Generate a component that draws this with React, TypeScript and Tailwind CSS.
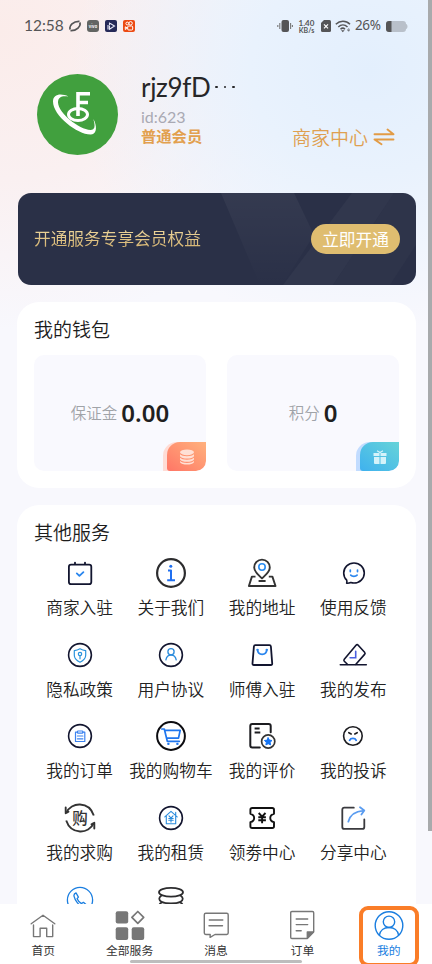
import type { ReactNode } from "react";

const NAVY = "#12152f";
const INK = "#2c2c2e";
const BLUE = "#1a7ee0";

type iconProps = {
  children: ReactNode;
  stroke?: string;
  width?: number;
};

const Icon = ({ children, stroke = NAVY, width = 1.7 }: iconProps) => (
  <svg
    viewBox="0 0 32 32"
    className="h-8 w-8 shrink-0"
    fill="none"
    stroke={stroke}
    strokeWidth={width}
    strokeLinecap="round"
    strokeLinejoin="round"
  >
    {children}
  </svg>
);

const Ring = () => <circle cx="16" cy="16" r="11.400" strokeWidth="1.600" />;

const services = [
  {
    label: "商家入驻",
    icon: (
      <Icon width={1.8}>
        <rect x="4.9" y="7.6" width="22.4" height="19.6" rx="2.2" />
        <path d="M11 5.6v1.6M21 5.6v1.6" />
        <path d="M12.8 16.4l2.6 2.5 4-3.8" stroke="#2a86ee" />
      </Icon>
    ),
  },
  {
    label: "关于我们",
    icon: (
      <Icon stroke={INK} width={2.2}>
        <circle cx="16" cy="16" r="13.9" />
        <circle cx="15.8" cy="9.2" r="1.5" fill="#1f6ff0" stroke="none" />
        <path
          d="M13 13.6h3v9.6M12.2 23.3h7.8"
          stroke="#1f6ff0"
          strokeWidth="2"
          strokeLinecap="butt"
        />
      </Icon>
    ),
  },
  {
    label: "我的地址",
    icon: (
      <Icon stroke="#333" width={1.9}>
        <path d="M16 21.4c-3.2-3.3-7.8-6.3-7.8-11a7.8 7.8 0 0 1 15.6 0c0 4.7-4.6 7.7-7.8 11z" />
        <circle cx="16" cy="10" r="3.2" stroke="#2a8cf0" strokeWidth="1.6" />
        <path d="M9.5 19.6H5.9L2.9 29h26.6l-3.1-9.400h-3.600M12.600 24h7" strokeLinecap="butt" />
      </Icon>
    ),
  },
  {
    label: "使用反馈",
    icon: (
      <Icon>
        <path
          d="M9.700 23.200C7.700 21.300 6.700 18.800 6.700 16a10.300 10 0 1 1 10.300 10c-1.200 0-2.300-.2-3.200-.5-1.300.6-2.600.9-4.200.7.400-1 .4-2 .1-3z"
          strokeWidth="1.600"
        />
        <path
          d="M13.300 13v1.600M20.500 13v1.600M13.700 18.200c1.500 1.500 4.900 1.500 6.400 0"
          stroke="#2a86ee"
        />
      </Icon>
    ),
  },
  {
    label: "隐私政策",
    icon: (
      <Icon>
        <Ring />
        <g stroke="#2a93dc" strokeWidth="1.200">
          <path d="M16 9.800c1.800 1.100 3.600 1.700 5.700 1.800v4.600c0 3.300-2.500 5.500-5.700 7-3.200-1.500-5.700-3.700-5.700-7v-4.600c2.100-.1 3.900-.7 5.700-1.800z" />
          <circle cx="16" cy="15" r="1.700" />
          <path d="M16 16.800v3" />
        </g>
      </Icon>
    ),
  },
  {
    label: "用户协议",
    icon: (
      <Icon>
        <Ring />
        <g stroke="#2a8bdc" strokeWidth="1.300">
          <circle cx="16" cy="12.800" r="3.100" />
          <path d="M10.900 20.900c.5-3 2.300-4.800 5.100-4.800s4.700 1.800 5.200 4.800" />
        </g>
      </Icon>
    ),
  },
  {
    label: "师傅入驻",
    icon: (
      <Icon width={1.800}>
        <path d="M9.300 6.200h14.200c.8 0 1.300.5 1.400 1.300l1.300 16.900c.1 1-.4 1.600-1.400 1.600H7.900c-1 0-1.500-.6-1.400-1.600L7.900 7.500c.1-.8.600-1.300 1.400-1.300z" />
        <path d="M11.500 10.800c.4 6 8.900 6 9.300 0" stroke="#2a86ee" />
        <path d="M11.500 10.800h.1M20.700 10.800h.1" stroke="#2a86ee" strokeWidth="2.300" />
      </Icon>
    ),
  },
  {
    label: "我的发布",
    icon: (
      <Icon width={1.600}>
        <path d="M10.400 25.300l-3.100-3c-.6-.7-.6-1.300 0-2.100L19 6.300c.8-.9 1.500-.9 2.200-.1l6.400 7c.7.8.7 1.400 0 2.200l-8.700 9.900" />
        <path d="M3.300 25.700h26" />
        <path d="M18.700 12.200v6.600h-5.600" stroke="#4a5fe0" strokeLinejoin="miter" />
      </Icon>
    ),
  },
  {
    label: "我的订单",
    icon: (
      <Icon>
        <Ring />
        <g stroke="#3c83f0" strokeWidth="1.200">
          <path d="M13.500 12.200h-2v9.300h9.300v-9.300h-2" />
          <rect x="13.500" y="11" width="5.300" height="2.200" rx=".5" />
          <path d="M13.400 16h5.500M13.400 18.800h5.500" />
        </g>
      </Icon>
    ),
  },
  {
    label: "我的购物车",
    icon: (
      <Icon stroke="#0c0c10" width={2}>
        <circle cx="16" cy="16" r="13.900" />
        <g stroke="#1f76ee" strokeWidth="1.700">
          <path d="M6.800 9h2.500l3 12.300h12M9.800 10.300h15.400l-1.700 7.800H11.700" />
          <path d="M13.300 23.900h.2M22.300 23.900h.2" strokeWidth="2.300" />
        </g>
      </Icon>
    ),
  },
  {
    label: "我的评价",
    icon: (
      <Icon stroke="#1c1c20" width={2}>
        <path d="M24.700 12.200V6c0-1.200-.7-2-2-2H6.300c-1.300 0-2 .8-2 2v19.400c0 1.200.7 2 2 2h7.500" />
        <path d="M8.600 8.500h5M8.600 12.600h5.700" strokeLinecap="butt" />
        <circle cx="22.200" cy="21.500" r="6.600" stroke="#333" strokeWidth="1.700" />
        <path
          d="M22.200 17.800l1.200 2.300 2.600.4-1.900 1.800.5 2.600-2.400-1.200-2.300 1.200.4-2.600-1.900-1.800 2.600-.4z"
          fill="#1474f4"
          stroke="#1474f4"
          strokeWidth="1"
        />
      </Icon>
    ),
  },
  {
    label: "我的投诉",
    icon: (
      <Icon stroke="#1c1c20" width={1.600}>
        <circle cx="15.900" cy="16" r="9.300" />
        <path d="M11.800 12.700l2.400 1.300M20.200 12.700l-2.400 1.300" />
        <path d="M12.600 20.300c1.200-2.500 5.400-2.500 6.600 0" stroke="#2a7ef0" strokeWidth="1.800" />
      </Icon>
    ),
  },
  {
    label: "我的求购",
    icon: (
      <Icon stroke="#333" width={1.900}>
        <path d="M2.300 10.800C7-.4 25-1 29.800 13.500M29.700 21.200C25 32.400 7 33 2.200 18.500" strokeLinecap="butt" />
        <path d="M1.700 5.500v5.800l2.800-1.600M30.300 26.500v-5.800l-2.800 1.600" />
        <text
          x="16"
          y="21.500"
          textAnchor="middle"
          fontSize="15.500"
          fontWeight="500"
          fill="#333"
          stroke="none"
        >
          购
        </text>
      </Icon>
    ),
  },
  {
    label: "我的租赁",
    icon: (
      <Icon>
        <Ring />
        <g stroke="#2a8bdc" strokeWidth="1.100">
          <path d="M9.800 14.800L16 9.300l6.200 5.500M11.300 13.800v8h9.400v-8M20.700 13v-2.700" />
          <path d="M14 13.800l2 2.300 2-2.300M16 16.100v4M13.800 16.500h4.400M13.800 18.300h4.400" />
        </g>
      </Icon>
    ),
  },
  {
    label: "领劵中心",
    icon: (
      <Icon stroke="#111" width={1.900}>
        <path d="M6.200 6h20c1.200 0 1.800.7 1.800 1.800v4c-5 1.200-5 7.200 0 8.400v4c0 1.200-.6 1.800-1.800 1.800h-20c-1.200 0-1.800-.6-1.800-1.800v-4c5-1.200 5-7.200 0-8.400v-4C4.400 6.700 5 6 6.200 6z" />
        <path
          d="M12.700 11l3.400 3.700 3.400-3.700M16.100 14.700v6.500M12.300 15.200h7.600M12.300 18.200h7.600"
          strokeLinecap="butt"
        />
      </Icon>
    ),
  },
  {
    label: "分享中心",
    icon: (
      <Icon stroke="#3a3a3e" width={1.800}>
        <path d="M16.800 5.700H7.300c-1.200 0-2 .8-2 2v17.200c0 1.200.8 2 2 2h18c1.200 0 2-.8 2-2v-7.500" />
        <path d="M11.300 19.700c1.600-6.300 6.300-10.400 15.200-11.100M23 5.300l4.300 3.200-2.900 4.100" stroke="#5a9cf0" />
      </Icon>
    ),
  },
  {
    icon: (
      <Icon stroke={BLUE} width={1.300}>
        <circle cx="16" cy="16" r="12.600" />
        <path d="M12 8.800c-1.400.6-2.300 1.600-2 3.300 1 4.300 4.700 9.400 9 10.600 1.600.4 2.800-.4 3.500-1.800l-3.100-2.600-1.900 1.300c-2.100-1-3.400-2.800-4.400-4.900l1.300-1.600z" />
      </Icon>
    ),
  },
  {
    icon: (
      <Icon stroke={INK} width={1.800}>
        <ellipse cx="16" cy="8.300" rx="12" ry="4.400" />
        <path d="M6.500 11.500c-3 2-3 4.600 0 6.200 4.500 2.400 14.500 2.400 19 0 3-1.600 3-4.200 0-6.200M6.500 18.500c-3 2-3 4.600 0 6.200 4.500 2.400 14.500 2.400 19 0 3-1.600 3-4.200 0-6.200" />
      </Icon>
    ),
  },
];

const tabs = [
  {
    label: "首页",
    icon: (
      <Icon stroke="#777" width={1.400}>
        <path d="M4.200 13.800L16 5.300l11.800 8.500M6.500 15v11.600h6.600v-8.300h6.600v8.300h6V15" />
      </Icon>
    ),
  },
  {
    label: "全部服务",
    icon: (
      <Icon stroke="#777" width={1.700}>
        <g fill="#777" stroke="none">
          <rect x="1.700" y="1.300" width="12.500" height="12.200" rx="2" />
          <rect x="1.700" y="17.200" width="12.500" height="12.700" rx="2" />
          <rect x="17.700" y="17.200" width="12.500" height="12.700" rx="2" />
        </g>
        <path d="M23.800 1.500l5.900 5.900-5.900 5.900-5.900-5.900z" />
      </Icon>
    ),
  },
  {
    label: "消息",
    icon: (
      <Icon stroke="#777" width={1.400}>
        <path d="M5.800 3.300h20.900c1 0 1.500.5 1.500 1.500v18.300c0 1-.5 1.400-1.500 1.400H15l-4.900 2.800.1-2.800H5.800c-1 0-1.500-.5-1.500-1.400V4.800c0-1 .5-1.500 1.500-1.500zM9.300 10h13.500M9 15.800h13.500" />
      </Icon>
    ),
  },
  {
    label: "订单",
    icon: (
      <Icon stroke="#777" width={1.400}>
        <path d="M5.900 1.500h20.500c.8 0 1.300.5 1.300 1.200v19.100l-6.500 6.700H5.900c-.8 0-1.200-.5-1.200-1.200V2.700c0-.7.5-1.200 1.200-1.200zM10.200 9h11.500M10.200 14.600h11.500M10.200 20.700h5" />
        <path d="M27.500 22h-6.200v6.300z" fill="#777" />
      </Icon>
    ),
  },
  {
    label: "我的",
    active: true,
    icon: (
      <Icon stroke={BLUE} width={1.400}>
        <circle cx="16" cy="15.500" r="13.800" />
        <circle cx="16" cy="11.800" r="5.700" />
        <path d="M6.500 25c.6-4.500 4.400-7.500 9.500-7.500s8.900 3 9.500 7.500" />
      </Icon>
    ),
  },
];

const StatusBar = () => (
  <div className="flex h-[52px] items-center justify-between pl-6 pr-[24px] text-[#555557]">
    <div className="flex items-center gap-[6px]">
      <span className="w-[39px] font-[Lato] text-[15.500px] leading-none">12:58</span>
      <svg viewBox="0 0 12 12" className="h-3 w-3" fill="none" stroke="currentColor">
        <path d="M1.300 9.500C-.5 6 4.500 1 10.500 1.300" strokeWidth="1.700" />
        <path d="M10.700 2.500C12.500 6 7.500 11 1.500 10.700" strokeWidth="1.700" />
      </svg>
      <div className="flex h-3 w-3 items-center justify-center rounded-[3px] bg-[#626563] text-[4px] font-bold text-white">
        vivo
      </div>
      <svg viewBox="0 0 12 12" className="h-3 w-3 rounded-[2px] bg-[#252958]">
        <path d="M3 5v4.500M4.500 2.500v3M4.500 3l5 3-5 3.300V6" fill="none" stroke="#e4e5f6" strokeWidth="1.100" />
      </svg>
      <svg viewBox="0 0 12 12" className="h-3 w-3 rounded-[2px] bg-[#ec4a12]">
        <g fill="none" stroke="#fff" strokeWidth="1">
          <circle cx="4.300" cy="3.500" r="1.400" />
          <circle cx="7.600" cy="3.300" r="1.700" />
          <rect x="4.700" y="6" width="5" height="4" rx="1" />
          <path d="M4.500 8L2.300 6.800v2.700z" />
        </g>
      </svg>
    </div>
    <div className="flex items-center">
      <svg viewBox="0 0 16 14" className="mr-[4px] h-[14px] w-4">
        <rect x="4.500" y="1" width="7.500" height="12" rx="2" fill="#555557" />
        <path d="M2.800 4v6M.8 6v2M13.600 4v6M15.400 6v2" stroke="#777" strokeWidth="1.100" />
      </svg>
      <div className="mr-[5px] w-[19px] whitespace-nowrap text-center font-[Lato] text-[8px] font-bold leading-[8px]">
        <div>1.40</div>
        <div className="text-[7px] leading-[7px]">KB/s</div>
      </div>
      <svg viewBox="0 0 10 12" className="mr-[4px] h-3 w-[10px]">
        <path d="M3 0h5.500A1.500 1.500 0 0 1 10 1.500v9A1.500 1.500 0 0 1 8.500 12h-7A1.500 1.500 0 0 1 0 10.500V3z" fill="#555557" />
        <path d="M3 4.300l4 4M7 4.300l-4 4" stroke="#fff" strokeWidth="1.200" />
      </svg>
      <svg viewBox="0 0 16 13" className="mr-[4px] h-[13px] w-4" fill="none" stroke="#555557" strokeWidth="1.500">
        <path d="M.8 4.300C5 .3 11 .3 15 4.300M3.300 7c2.700-2.600 6.500-2.600 9.200 0" />
        <path d="M5.500 9.200c1.400-1.300 3.200-1.300 4.500 0" />
        <path d="M6 10.200h3.600l-1.800 2z" fill="#555557" stroke="none" />
        <path d="M12.200 10h3M13.700 8.500v3.500" strokeWidth="1" strokeDasharray="1 .6" />
      </svg>
      <span className="mr-[4px] w-[27px] whitespace-nowrap font-['Noto_Sans'] text-[13.500px] leading-none tracking-[-0.400px]">
        26%
      </span>
      <svg viewBox="0 0 22 11" className="h-[11px] w-[22px]">
        <rect width="20" height="11" rx="3" fill="#b9c0ca" />
        <path d="M3 0h2.500v11H3a3 3 0 0 1-3-3V3a3 3 0 0 1 3-3z" fill="#555557" />
        <path d="M20 3c2 .5 2 4.500 0 5z" fill="#b9c0ca" />
      </svg>
    </div>
  </div>
);

const Profile = () => (
  <div className="flex h-[141px] pl-[37px] pt-[22px]">
    <svg viewBox="0 0 81 81" className="h-[81px] w-[81px] shrink-0">
      <circle cx="40.500" cy="40.500" r="40.500" fill="#41a03e" />
      <path
        d="M31.500 22.500C24 19 16 20 16 27.500C16 42 41 61 54 60.500C60.500 60 60 51 56.300 45C58.500 52 58 56 53.500 56C42 55.500 21.500 39 21 28.500C21 22.500 25.500 21.500 31.500 22.500Z"
        fill="#fff"
      />
      <ellipse cx="41" cy="40.500" rx="9.500" ry="6" fill="none" stroke="#fff" strokeWidth="3" />
      <path d="M41 42V19.800h12M41 28.500h10" fill="none" stroke="#fff" strokeWidth="3.600" />
    </svg>
    <div className="ml-[23px] flex w-[150px] flex-col">
      <div className="-mt-[2px] flex h-[30px] items-center whitespace-nowrap text-[#262628]">
        <span className="w-[74px] font-[Lato] text-[26px] leading-none tracking-[-0.300px]">rjz9fD</span>
        <span className="flex gap-[6px]">
          <i className="h-[2.500px] w-[2.500px] rounded-full bg-[#262628]" />
          <i className="h-[2.500px] w-[2.500px] rounded-full bg-[#262628]" />
          <i className="h-[2.500px] w-[2.500px] rounded-full bg-[#262628]" />
        </span>
      </div>
      <div className="mt-[6px] font-[Lato] text-[16px] leading-[18px] text-[#a9a9b3]">id:623</div>
      <div className="text-[15.300px] font-bold leading-[18px] text-[#e2a04f]">普通会员</div>
    </div>
    <div className="mt-[51px] flex h-6 items-center text-[19px] font-[350] text-[#dfa050]">
      <span className="ml-[1px] whitespace-nowrap">商家中心</span>
      <svg
        viewBox="0 0 22 18"
        className="ml-[5px] h-[18px] w-[22px]"
        fill="none"
        stroke="#e29b45"
        strokeWidth="1.900"
        strokeLinecap="round"
        strokeLinejoin="round"
      >
        <path d="M1.500 6.300h19L14.500 1.500M20.500 11.500h-19l7 4.700" />
      </svg>
    </div>
  </div>
);

const VipBanner = () => (
  <div className="relative ml-[18px] mr-4 flex h-[92px] items-center justify-between overflow-hidden rounded-[13px] bg-[#2a3047] pl-4 pr-4">
    <svg viewBox="0 0 398 92" className="absolute inset-0 h-full w-full" preserveAspectRatio="none">
      <defs>
        <linearGradient id="shine" x1="0" y1="0" x2="0" y2="1">
          <stop offset="0" stopColor="#fff" stopOpacity=".05" />
          <stop offset="1" stopColor="#fff" stopOpacity="0" />
        </linearGradient>
      </defs>
      <path d="M203 0h73l20 42-32 50h-22z" fill="url(#shine)" />
      <path d="M334 0h42l-61 92h-50z" fill="#fff" fillOpacity=".035" />
      <path d="M376 0h22v52l-26 40h-57z" fill="#fff" fillOpacity=".018" />
    </svg>
    <span className="relative bg-gradient-to-b from-[#f2dda4] to-[#cfac68] bg-clip-text text-[16.700px] text-transparent">
      开通服务专享会员权益
    </span>
    <button className="relative h-[30px] w-[89px] rounded-full bg-[#dfbd70] text-[16.700px] leading-[29px] text-white">
      立即开通
    </button>
  </div>
);

const Wallet = () => (
  <section className="ml-[17px] mr-4 mt-[17px] h-[186px] rounded-[22px] bg-white px-[17px] pt-[13px]">
    <h2 className="text-[19px] font-[350] leading-7 text-[#1c1c1c]">我的钱包</h2>
    <div className="mt-[12px] flex justify-between">
      <div className="relative flex h-[116px] w-[172px] items-center justify-center overflow-hidden rounded-[10px] bg-[#f9f9fe]">
        <span className="text-[15.500px] font-[350] text-[#a0a3a8]">保证金</span>
        <span className="ml-[4px] font-['Noto_Sans'] text-[24px] font-semibold text-[#1f1f21]">0.00</span>
        <div className="absolute bottom-0 right-0 rounded-tl-[14px] bg-[#ffdcd5] pl-[4px]">
          <div className="flex h-[29px] w-[39px] items-center justify-center rounded-bl-[3px] rounded-br-[10px] rounded-tl-[13px] bg-gradient-to-tr from-[#ff7566] to-[#ffb17d]">
            <svg viewBox="0 0 16 16" className="h-4 w-4" fill="#ffe0d5">
              <ellipse cx="8" cy="3.300" rx="7" ry="2.900" />
              <path d="M1 5.200c2 2.600 12 2.600 14 0v2c-1.500 3.200-12.500 3.200-14 0z" />
              <path d="M1 8.700c2 2.600 12 2.600 14 0v1.700c-1.500 3.200-12.500 3.200-14 0z" />
              <path d="M1 12c2 2.600 12 2.600 14 0v1.200c-1.500 3.200-12.500 3.200-14 0z" />
            </svg>
          </div>
        </div>
      </div>
      <div className="relative flex h-[116px] w-[172px] items-center justify-center overflow-hidden rounded-[10px] bg-[#f9f9fe]">
        <span className="text-[15.500px] font-[350] text-[#a0a3a8]">积分</span>
        <span className="ml-[4px] font-['Noto_Sans'] text-[24px] font-semibold text-[#1f1f21]">0</span>
        <div className="absolute bottom-0 right-0 rounded-tl-[14px] bg-[#c2dcff] pl-[4px]">
          <div className="flex h-[29px] w-[39px] items-center justify-center rounded-bl-[3px] rounded-br-[10px] rounded-tl-[13px] bg-gradient-to-tr from-[#3fb1ee] to-[#66d3d8]">
            <svg viewBox="0 0 14 14" className="h-[14px] w-[14px]" fill="#d4f3fa">
              <path d="M.5 3h6v3h-6zM7.500 3h6v3h-6zM1 7h5.500v7H2a1 1 0 0 1-1-1zM7.500 7H13v6a1 1 0 0 1-1 1H7.500z" />
              <path d="M4 .8L7 2.500l3-1.700" fill="none" stroke="#d4f3fa" strokeWidth="1.200" />
            </svg>
          </div>
        </div>
      </div>
    </div>
  </section>
);

const Services = () => (
  <section className="ml-[17px] mr-4 mt-[17px] h-[480px] rounded-[22px] bg-white px-[17px] pt-[13px]">
    <h2 className="text-[19px] font-[350] leading-7 text-[#1c1c1c]">其他服务</h2>
    <div className="mt-[11px] grid grid-cols-4 gap-y-[19.700px]">
      {services.map(({ label, icon }, index) => (
        <div key={index} className="flex h-[62px] flex-col items-center">
          {icon}
          {label && (
            <span className="mt-[6px] whitespace-nowrap text-[16.700px] font-[350] leading-6 text-[#222]">
              {label}
            </span>
          )}
        </div>
      ))}
    </div>
  </section>
);

const TabBar = () => (
  <nav className="relative grid h-[60px] shrink-0 grid-cols-5 bg-white">
    {tabs.map(({ label, icon, active }) => (
      <div key={label} className="flex flex-col items-center pt-[6px]">
        {icon}
        <span className={`text-[11.800px] leading-4 ${active ? "text-[#1a7ee0]" : "text-[#333]"}`}>
          {label}
        </span>
      </div>
    ))}
    <div className="absolute bottom-[1px] left-[130px] h-[3px] w-[172px] rounded-full bg-[#bdbdbd]" />
    <div className="absolute left-[359px] top-[2px] h-[61px] w-[60px] rounded-[9px] border-[4.500px] border-[#fa7d28]" />
  </nav>
);

export default function App() {
  return (
    <div className="relative flex h-[964px] w-[432px] flex-col overflow-hidden bg-[#f8f8fd] bg-[radial-gradient(ellipse_300px_260px_at_370px_70px,#e3effd_0%,#e9f2fd_40%,transparent_100%),radial-gradient(ellipse_340px_300px_at_0px_30px,#fbecea_0%,#faf0f1_50%,transparent_100%)] font-['Noto_Sans_CJK_SC',sans-serif]">
      <main className="min-h-0 flex-1 overflow-hidden">
        <StatusBar />
        <Profile />
        <VipBanner />
        <Wallet />
        <Services />
      </main>
      <TabBar />
      <div className="absolute right-0 top-0 h-[831px] w-[4px] bg-[#a8aaac]" />
    </div>
  );
}
